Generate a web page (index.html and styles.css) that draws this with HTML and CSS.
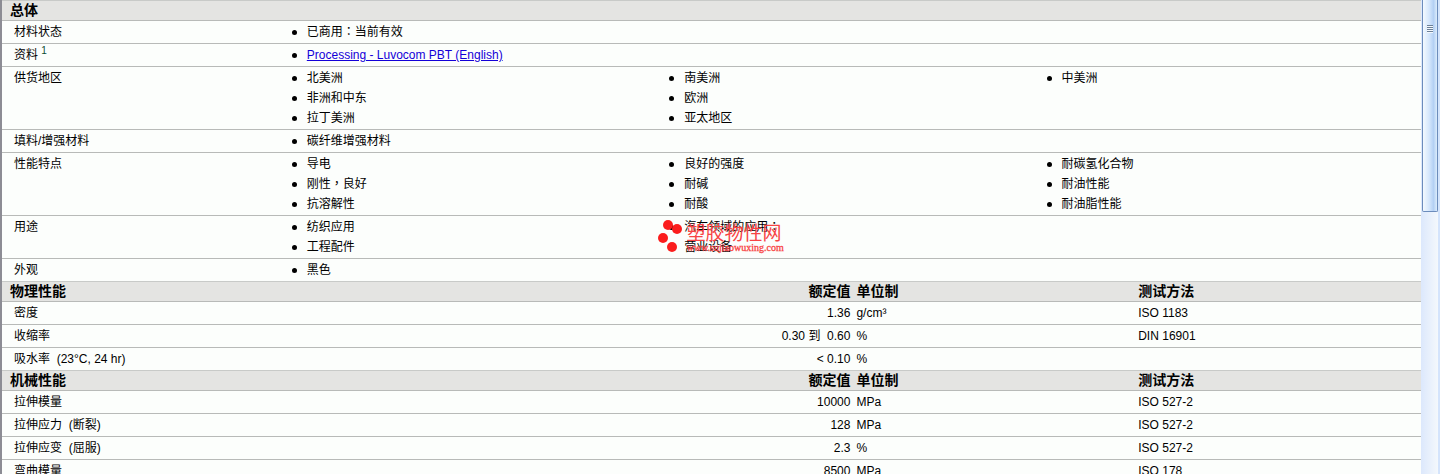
FILE: index.html
```
<!DOCTYPE html>
<html lang="zh-CN">
<head>
    <meta charset="UTF-8">
    <meta name="viewport" content="width=device-width, initial-scale=1.0">
    <title>Luvocom PBT</title>
    <link rel="stylesheet" href="styles.css">
</head>
<body>
    <div class="page">
        <div class="content">
            <!-- General -->
            <table class="sheet general">
                <colgroup>
                    <col class="col-name">
                    <col>
                </colgroup>
                <thead>
                    <tr><th colspan="2">总体</th></tr>
                </thead>
                <tbody>
                    <tr>
                        <td class="name">材料状态</td>
                        <td><div class="lists"><ul><li><span>已商用<span class="punct" lang="zh-TW">：</span>当前有效</span></li></ul></div></td>
                    </tr>
                    <tr>
                        <td class="name">资料 <sup>1</sup></td>
                        <td><div class="lists"><ul><li><a href="#">Processing - Luvocom PBT (English)</a></li></ul></div></td>
                    </tr>
                    <tr>
                        <td class="name">供货地区</td>
                        <td>
                            <div class="lists">
                                <ul><li>北美洲</li><li>非洲和中东</li><li>拉丁美洲</li></ul>
                                <ul><li>南美洲</li><li>欧洲</li><li>亚太地区</li></ul>
                                <ul><li>中美洲</li></ul>
                            </div>
                        </td>
                    </tr>
                    <tr>
                        <td class="name">填料/增强材料</td>
                        <td><div class="lists"><ul><li>碳纤维增强材料</li></ul></div></td>
                    </tr>
                    <tr>
                        <td class="name">性能特点</td>
                        <td>
                            <div class="lists">
                                <ul><li>导电</li><li><span>刚性<span class="punct" lang="zh-TW">，</span>良好</span></li><li>抗溶解性</li></ul>
                                <ul><li>良好的强度</li><li>耐碱</li><li>耐酸</li></ul>
                                <ul><li>耐碳氢化合物</li><li>耐油性能</li><li>耐油脂性能</li></ul>
                            </div>
                        </td>
                    </tr>
                    <tr>
                        <td class="name">用途</td>
                        <td>
                            <div class="lists">
                                <ul><li>纺织应用</li><li>工程配件</li></ul>
                                <ul><li><span>汽车领域的应用<span class="punct" lang="zh-TW">：</span></span></li><li>营业设备</li></ul>
                            </div>
                        </td>
                    </tr>
                    <tr>
                        <td class="name">外观</td>
                        <td><div class="lists"><ul><li>黑色</li></ul></div></td>
                    </tr>
                </tbody>
            </table>

            <!-- Physical -->
            <table class="sheet data">
                <thead>
                    <tr><th>物理性能</th><th class="value">额定值</th><th class="unit">单位制</th><th class="method">测试方法</th></tr>
                </thead>
                <tbody>
                    <tr><td class="name">密度</td><td class="value">1.36</td><td class="unit">g/cm³</td><td class="method">ISO 1183</td></tr>
                    <tr><td class="name">收缩率</td><td class="value">0.30 到&nbsp; 0.60</td><td class="unit">%</td><td class="method">DIN 16901</td></tr>
                    <tr><td class="name">吸水率&nbsp; (23°C, 24 hr)</td><td class="value">&lt; 0.10</td><td class="unit">%</td><td class="method"></td></tr>
                </tbody>
            </table>

            <!-- Mechanical -->
            <table class="sheet data">
                <thead>
                    <tr><th>机械性能</th><th class="value">额定值</th><th class="unit">单位制</th><th class="method">测试方法</th></tr>
                </thead>
                <tbody>
                    <tr><td class="name">拉伸模量</td><td class="value">10000</td><td class="unit">MPa</td><td class="method">ISO 527-2</td></tr>
                    <tr><td class="name">拉伸应力&nbsp; (断裂)</td><td class="value">128</td><td class="unit">MPa</td><td class="method">ISO 527-2</td></tr>
                    <tr><td class="name">拉伸应变&nbsp; (屈服)</td><td class="value">2.3</td><td class="unit">%</td><td class="method">ISO 527-2</td></tr>
                    <tr><td class="name">弯曲模量</td><td class="value">8500</td><td class="unit">MPa</td><td class="method">ISO 178</td></tr>
                </tbody>
            </table>

            <!-- Watermark over the table -->
            <div class="watermark">
                <svg width="26" height="34" viewBox="0 0 26 34">
                    <g fill="#fb1d1d">
                        <circle cx="10" cy="5" r="5"/>
                        <circle cx="19" cy="9" r="5"/>
                        <circle cx="5" cy="18" r="5"/>
                        <circle cx="14" cy="27" r="5"/>
                    </g>
                </svg>
                <div class="brand">
                    <span class="brand-name">塑胶物性网</span>
                    <span class="brand-url">www.sujiaowuxing.com</span>
                </div>
            </div>
        </div>

        <div class="scrollbar">
            <div class="thumb">
                <div class="grip"></div>
            </div>
        </div>
    </div>
</body>
</html>
```
FILE: styles.css
```
body {
    margin: 0;
    font-family: "Liberation Sans", "Noto Sans CJK SC", sans-serif;
    font-size: 12px;
    line-height: 20px;
    color: #000;
    background-color: #fcfefc;
}

.page {
    display: flex;
    height: 100vh;
    overflow: hidden;
}

.content {
    position: relative;
    flex: 1;
    border-left: 2px solid #8c8c94;
}

.sheet {
    width: 100%;
    table-layout: fixed;
    border-collapse: separate;
    border-spacing: 0;
}

.general {
    border-top: 1px solid #c8cac8;
}

.col-name {
    width: 20%;
}

th {
    height: 19px;
    padding: 0 3px;
    border-bottom: 1px solid #b8bab8;
    background-color: #e4e4e2;
    font-size: 14px;
    line-height: 19px;
    text-align: left;
}

th:first-child {
    padding-left: 8px;
}

td {
    height: 20px;
    padding: 1px 3px;
    border-bottom: 1px solid #b8bab8;
    vertical-align: top;
}

tbody tr:last-child td {
    border-bottom-color: #c8cac8;
}

.general td {
    padding-right: 0;
}

.name {
    padding-left: 12px;
}

.data .value {
    width: 20%;
    box-sizing: border-box;
    text-align: right;
}

.data .unit,
.data .method {
    width: 20%;
    box-sizing: border-box;
}

.data .method {
    padding-left: 1px;
}

sup {
    font-size: 10px;
    line-height: 1;
    color: #0c4c34;
}

a {
    color: #1400d8;
}

/* centred colon and comma */
.punct {
    font-family: "Noto Sans CJK TC", sans-serif;
    line-height: 1;
}

.lists {
    display: grid;
    grid-template-columns: repeat(3, 1fr);
}

ul {
    margin: 0;
    padding: 0;
    list-style: none;
}

li {
    display: flex;
    align-items: center;
    gap: 10px;
    padding-left: 3px;
}

li::before {
    content: "";
    width: 5px;
    height: 5px;
    border-radius: 50%;
    background-color: #000;
}

.watermark {
    position: absolute;
    top: 220px;
    left: 46.2%;
    display: flex;
    gap: 3px;
    color: #f84444;
}

.brand {
    display: flex;
    flex-direction: column;
    white-space: nowrap;
}

.brand-name {
    font-size: 19px;
    line-height: 28px;
}

.brand-url {
    font-family: "Liberation Serif", serif;
    font-size: 10px;
    line-height: 0;
    -webkit-text-stroke: 0.3px #f84444;
}

/* Scrollbar */
.scrollbar {
    width: 19px;
    box-sizing: border-box;
    border-right: 2px solid #d4e4fc;
    background: linear-gradient(to right, #dce8fc, #f4f8fc);
}

.thumb {
    display: flex;
    justify-content: center;
    height: 211px;
    margin-left: 1px;
    border: 1px solid #6c8cbc;
    border-top: none;
    border-radius: 0 0 2px 2px;
    background: linear-gradient(to right, #f4faff, #d4e6fc 45%, #b4d0f4 75%, #dcecfc);
}

.grip {
    width: 6px;
    height: 8px;
    margin-top: 25px;
    background: repeating-linear-gradient(#6c8098 0 1px, #f4f8fc 1px 2px);
}
```
